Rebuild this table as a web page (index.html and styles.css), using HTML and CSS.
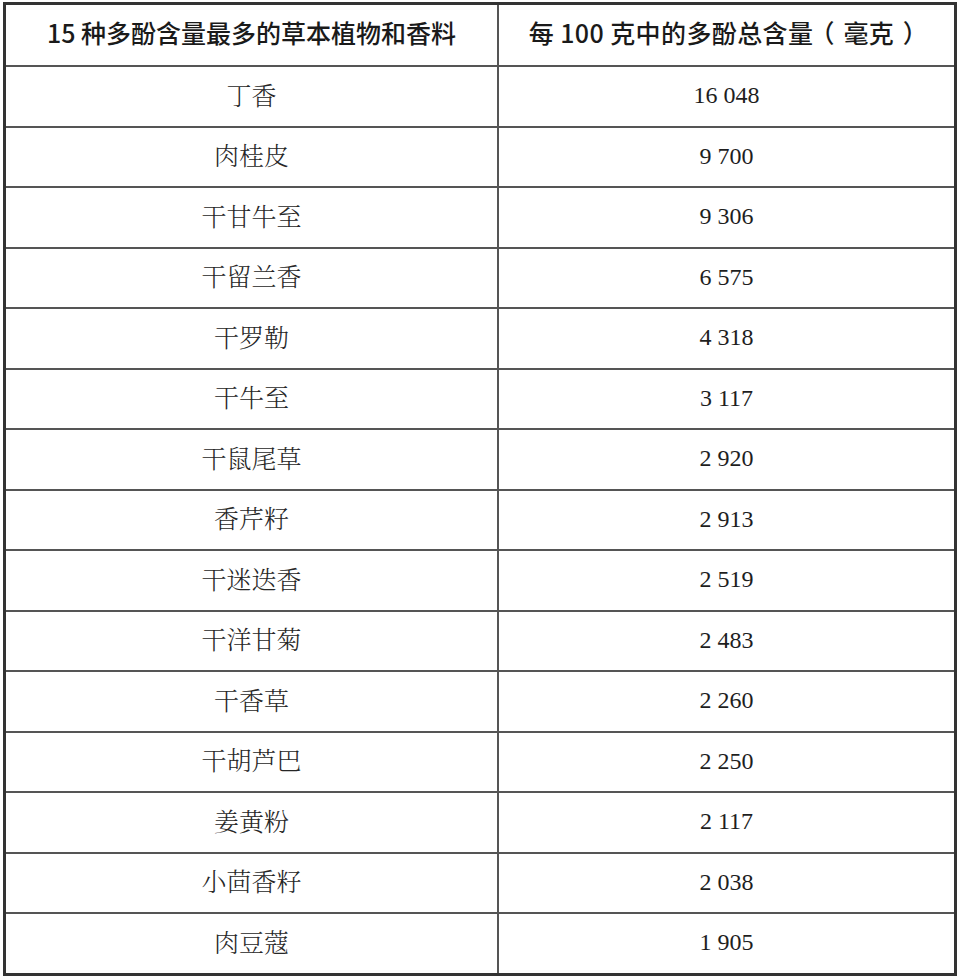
FILE: index.html
```html
<!DOCTYPE html>
<html lang="zh-CN">
<head>
<meta charset="utf-8">
<title>多酚含量</title>
<link rel="stylesheet" href="styles.css">
</head>
<body>
<table class="data">
  <thead>
    <tr>
      <th class="col-name">15 种多酚含量最多的草本植物和香料</th>
      <th class="col-val">每 100 克中的多酚总含量<span class="paren">（</span>毫克<span class="paren">）</span></th>
    </tr>
  </thead>
  <tbody>
    <tr><td class="name">丁香</td><td class="num">16 048</td></tr>
    <tr><td class="name">肉桂皮</td><td class="num">9 700</td></tr>
    <tr><td class="name">干甘牛至</td><td class="num">9 306</td></tr>
    <tr><td class="name">干留兰香</td><td class="num">6 575</td></tr>
    <tr><td class="name">干罗勒</td><td class="num">4 318</td></tr>
    <tr><td class="name">干牛至</td><td class="num">3 117</td></tr>
    <tr><td class="name">干鼠尾草</td><td class="num">2 920</td></tr>
    <tr><td class="name">香芹籽</td><td class="num">2 913</td></tr>
    <tr><td class="name">干迷迭香</td><td class="num">2 519</td></tr>
    <tr><td class="name">干洋甘菊</td><td class="num">2 483</td></tr>
    <tr><td class="name">干香草</td><td class="num">2 260</td></tr>
    <tr><td class="name">干胡芦巴</td><td class="num">2 250</td></tr>
    <tr><td class="name">姜黄粉</td><td class="num">2 117</td></tr>
    <tr><td class="name">小茴香籽</td><td class="num">2 038</td></tr>
    <tr><td class="name">肉豆蔻</td><td class="num">1 905</td></tr>
  </tbody>
</table>
</body>
</html>
```
FILE: styles.css
```css
html, body {
  margin: 0;
  padding: 0;
  background: #ffffff;
}

body {
  padding: 2px 0 0 3px;
}

.data {
  border-collapse: collapse;
  width: 954px;
  border: 3px solid #333333;
  color: #1e1e1e;
  table-layout: fixed;
}

.data th,
.data td {
  border: 2px solid #555555;
  text-align: center;
  vertical-align: middle;
  padding: 0;
}

.col-name {
  width: 491px;
}

.data th {
  height: 54px;
  padding: 0 0 6px 0;
  font-family: "Noto Sans CJK SC", "Liberation Sans", sans-serif;
  font-size: 25px;
  font-weight: 450;
  color: #1a1a1a;
}

.col-val {
  letter-spacing: 0.4px;
}

.paren {
  display: inline-block;
  width: 30px;
  text-align: center;
  font-feature-settings: "halt" 1;
}

.data td {
  height: 53.5px;
}

.data td.name {
  padding: 0 0 5px 0;
  font-family: "Noto Serif CJK SC", "Noto Sans CJK SC", sans-serif;
  font-size: 25px;
  font-weight: 300;
  color: #262626;
}

.data td.num {
  padding: 2px 0 3px 0;
  font-family: "Liberation Serif", "Times New Roman", serif;
  font-size: 24px;
  color: #1e1e1e;
}
```
